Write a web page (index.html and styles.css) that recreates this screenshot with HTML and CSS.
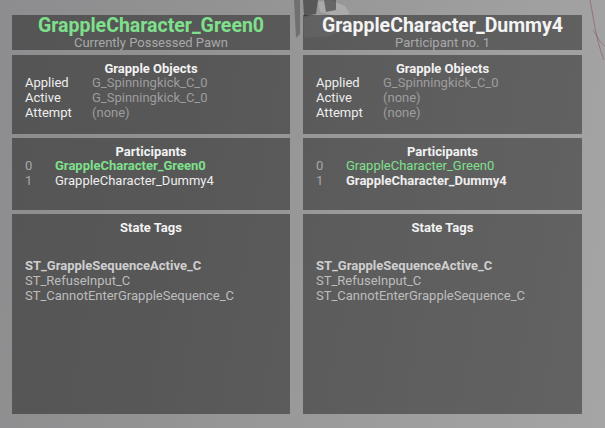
FILE: index.html
```html
<!DOCTYPE html>
<html>
<head>
<meta charset="utf-8">
<link rel="stylesheet" href="styles.css">
</head>
<body>
<svg class="decor" width="605" height="70" viewBox="0 0 605 70" aria-hidden="true">
  <path d="M294 0 L300 0 L300 34 L296 38 Z" fill="#4a4a4c" opacity="0.5"/>
  <path d="M303 0 L318 0 L316 14 L304 16 Z" fill="#2e2e30" opacity="0.6"/>
  <path d="M318 2 L330 0 L345 6 L350 14 L336 16 L320 12 Z" fill="#d8d8d8" opacity="0.3"/>
  <path d="M324 0 L336 0 L336 10 L326 12 Z" fill="#3a3a3c" opacity="0.6"/>
  <path d="M303 18 L318 14 L338 20 L344 30 L330 36 L304 38 Z" fill="#c0c0c4" opacity="0.3"/>
  <path d="M590 0 C594 20 596 40 604 60" stroke="#8a5560" stroke-width="1" fill="none" opacity="0.6"/>
  <path d="M593 30 C598 38 601 44 605 46" stroke="#8a5560" stroke-width="1" fill="none" opacity="0.5"/>
</svg>
<div class="board">
  <div class="column">
    <div class="panel header">
      <div class="title green">GrappleCharacter_Green0</div>
      <div class="subtitle">Currently Possessed Pawn</div>
    </div>
    <div class="panel section objects">
      <div class="section-title">Grapple Objects</div>
      <div class="kv">
        <span class="key">Applied</span><span class="val">G_Spinningkick_C_0</span>
        <span class="key">Active</span><span class="val">G_Spinningkick_C_0</span>
        <span class="key">Attempt</span><span class="val">(none)</span>
      </div>
    </div>
    <div class="panel section participants">
      <div class="section-title">Participants</div>
      <div class="plist">
        <span class="idx">0</span><span class="pname green bold">GrappleCharacter_Green0</span>
        <span class="idx">1</span><span class="pname">GrappleCharacter_Dummy4</span>
      </div>
    </div>
    <div class="panel section tags">
      <div class="section-title">State Tags</div>
      <div class="taglist">
        <div class="tag bold">ST_GrappleSequenceActive_C</div>
        <div class="tag">ST_RefuseInput_C</div>
        <div class="tag">ST_CannotEnterGrappleSequence_C</div>
      </div>
    </div>
  </div>
  <div class="column wide">
    <div class="panel header">
      <div class="title">GrappleCharacter_Dummy4</div>
      <div class="subtitle">Participant no. 1</div>
    </div>
    <div class="panel section objects">
      <div class="section-title">Grapple Objects</div>
      <div class="kv">
        <span class="key">Applied</span><span class="val">G_Spinningkick_C_0</span>
        <span class="key">Active</span><span class="val">(none)</span>
        <span class="key">Attempt</span><span class="val">(none)</span>
      </div>
    </div>
    <div class="panel section participants">
      <div class="section-title">Participants</div>
      <div class="plist">
        <span class="idx">0</span><span class="pname green">GrappleCharacter_Green0</span>
        <span class="idx">1</span><span class="pname bold">GrappleCharacter_Dummy4</span>
      </div>
    </div>
    <div class="panel section tags">
      <div class="section-title">State Tags</div>
      <div class="taglist">
        <div class="tag bold">ST_GrappleSequenceActive_C</div>
        <div class="tag">ST_RefuseInput_C</div>
        <div class="tag">ST_CannotEnterGrappleSequence_C</div>
      </div>
    </div>
  </div>
</div>
</body>
</html>
```

FILE: styles.css
```css
html, body {
  margin: 0;
  padding: 0;
}
body {
  width: 605px;
  height: 428px;
  overflow: hidden;
  position: relative;
  font-family: Roboto, "Noto Sans", sans-serif;
  background: linear-gradient(100deg, #8d8d8f 0%, #939394 35%, #9c9b9c 60%, #a6a5a6 100%);
  color: #eeeeee;
}
.decor {
  position: absolute;
  left: 0;
  top: 0;
}
.board {
  position: relative;
  display: flex;
  gap: 13px;
  padding: 15px 0 0 12px;
}
.column {
  width: 278px;
  height: 399px;
  display: flex;
  flex-direction: column;
  gap: 4px;
}
.column.wide {
  width: 279px;
}
.panel {
  background: rgba(0, 0, 0, 0.4);
}
.header {
  height: 35px;
  margin-bottom: 1px;
  text-align: center;
  box-sizing: border-box;
  padding-top: 1px;
}
.title {
  font-size: 19.5px;
  font-weight: 700;
  line-height: 20px;
  color: #f4f4f4;
}
.subtitle {
  font-size: 13px;
  line-height: 13px;
  color: #a9a9a9;
}
.green {
  color: #7fe08c;
}
.bold {
  font-weight: 700;
}
.section {
  box-sizing: border-box;
  padding: 8px 13px 0 13px;
  font-size: 13px;
}
.objects {
  height: 79px;
}
.participants {
  height: 72px;
}
.tags {
  flex: 1;
}
.section-title {
  text-align: center;
  font-weight: 700;
  line-height: 12px;
  color: #f2f2f2;
}
.kv {
  display: grid;
  grid-template-columns: 67px 1fr;
  line-height: 15px;
}
.key {
  color: #eeeeee;
}
.val {
  color: #9d9d9d;
}
.plist {
  display: grid;
  grid-template-columns: 30px 1fr;
  line-height: 15px;
}
.idx {
  color: #a8a8a8;
}
.pname {
  color: #eeeeee;
}
.pname.green {
  color: #7fe08c;
}
.taglist {
  margin-top: 24px;
  line-height: 15px;
}
.tag {
  color: #bdbdbd;
}
.tag.bold {
  color: #cfcfcf;
}
```
